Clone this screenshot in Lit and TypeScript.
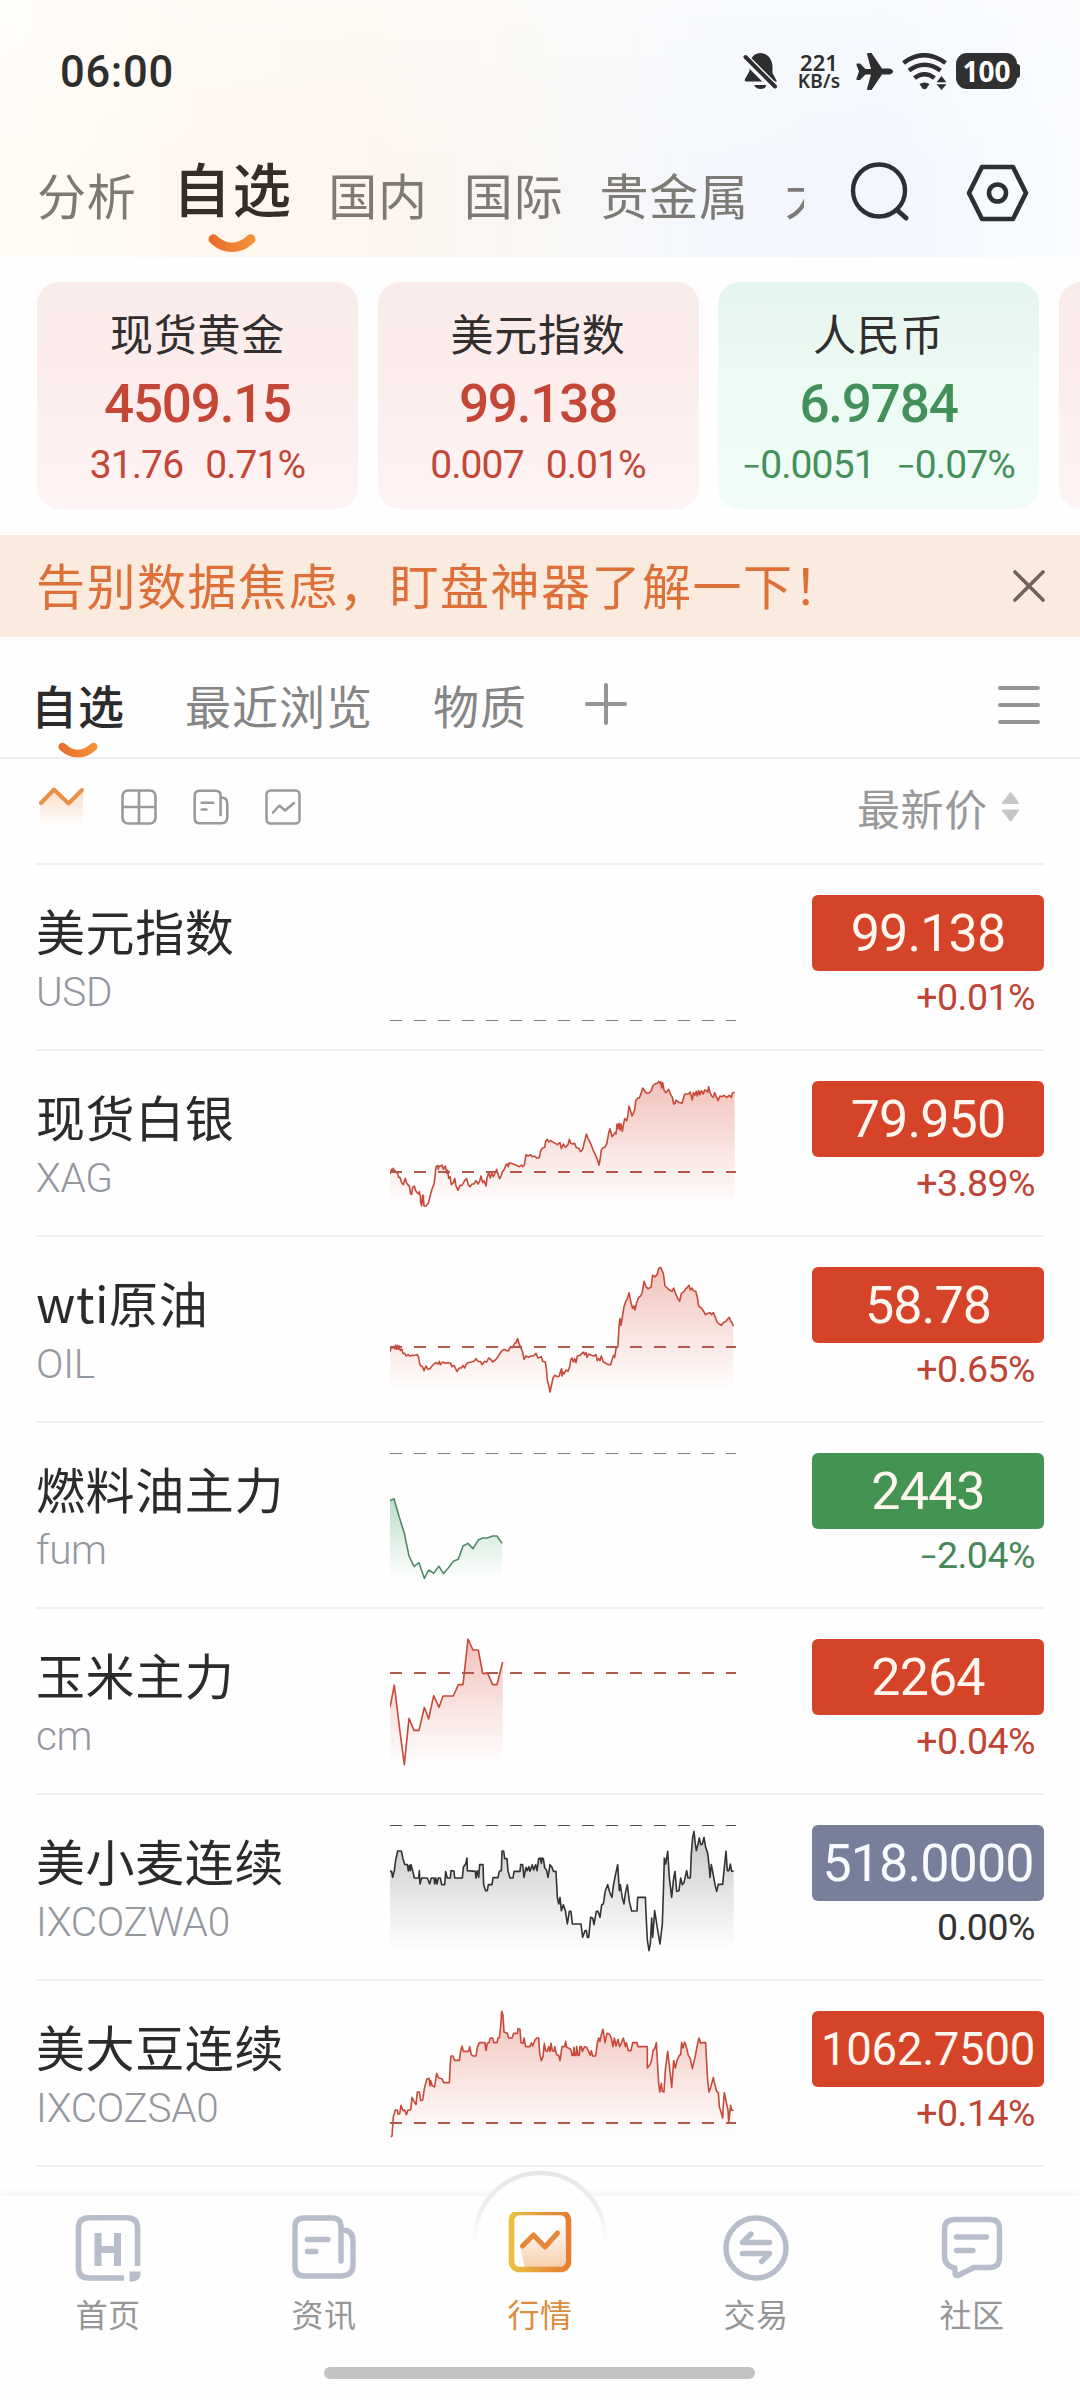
import { LitElement, html, svg, css } from "lit";
import { customElement, property } from "lit/decorators.js";

type Tone = "up" | "down" | "flat";

interface Quote {
  name: string;
  code: string;
  price: string;
  change: string;
  tone: Tone;
  top: number;
  base: number;
  thin?: boolean;
  points: string;
}

const SILVER =
  "60,343 62,335 65,328 67,333 70,325 72,335 75,332 78,338 82,336 86,352 90,352 95,368 100,374 106,355 110,370 114,375 118,378 122,402 125,403 128,382 133,378 136,390 141,398 146,402 148,395 151,410 152,428 155,437 158,405 160,408 162,438 168,438 175,430 180,410 186,388 192,372 195,350 198,320 203,317 205,328 207,318 213,318 216,315 220,328 226,318 230,340 233,330 236,355 240,350 244,374 250,368 254,355 258,378 264,391 270,376 276,376 284,362 290,356 295,374 300,380 306,372 312,372 318,362 324,372 329,364 333,348 338,368 342,362 348,378 352,350 356,338 361,354 365,338 370,350 375,340 380,328 384,343 389,356 394,346 397,335 403,328 408,315 412,312 415,320 418,308 428,311 436,314 443,318 448,320 454,315 458,320 463,315 468,284 474,288 482,284 486,290 494,288 500,294 508,293 512,272 518,264 524,262 527,244 532,238 536,246 542,242 552,248 562,254 570,248 574,266 580,252 586,262 594,254 598,238 602,250 608,252 614,250 619,263 626,265 632,275 638,268 642,250 646,236 649,222 654,235 662,250 670,272 676,284 682,298 687,315 690,300 694,270 698,264 704,262 710,252 716,220 720,206 726,230 731,224 735,218 738,222 741,192 744,206 747,190 750,210 753,192 757,214 760,196 764,176 770,182 774,164 777,138 781,150 786,168 790,160 794,150 797,122 803,114 808,114 812,104 818,84 824,92 830,100 838,98 844,92 848,78 854,72 862,70 866,64 870,70 872,65 875,84 878,68 882,90 888,98 896,88 902,104 907,112 911,132 915,130 918,120 926,127 936,130 940,116 944,102 950,102 956,102 960,96 964,108 967,120 970,98 974,106 979,94 982,108 986,92 990,104 994,92 1000,102 1004,90 1010,92 1013,96 1016,80 1020,98 1025,108 1030,112 1034,98 1038,108 1044,122 1050,108 1056,110 1062,106 1070,112 1078,106 1084,112 1088,98 1094,97";

const OIL =
  "60,876 63,862 66,864 70,860 73,866 77,855 79,868 83,856 85,868 88,858 91,872 96,868 99,880 104,880 109,888 114,884 120,888 128,886 136,885 142,884 146,892 149,912 153,918 158,920 162,932 168,918 174,928 180,926 186,918 192,912 198,908 204,912 208,904 211,914 218,906 226,910 234,908 242,910 246,920 252,916 256,924 261,934 268,924 274,924 279,916 284,924 288,914 294,908 304,906 312,904 318,896 324,904 332,905 336,914 344,904 350,906 356,894 362,898 368,906 376,900 384,890 390,880 396,872 402,868 410,872 416,872 420,862 428,862 434,850 438,848 443,836 448,854 452,862 458,876 462,898 468,888 476,892 482,888 490,888 498,880 504,894 514,890 518,904 526,906 529,925 532,960 536,975 540,996 544,978 549,954 554,946 562,950 568,948 571,936 575,926 576,948 579,936 582,942 588,930 594,934 599,920 602,900 606,894 610,906 614,896 618,908 622,888 630,886 636,880 641,876 644,884 648,878 651,892 656,882 664,886 672,888 678,884 682,902 686,896 690,902 694,888 700,906 708,910 714,914 722,914 726,900 731,886 734,892 738,866 744,858 747,800 750,776 753,796 757,772 762,740 766,728 772,716 777,698 783,728 788,745 792,738 795,750 800,728 806,712 812,708 817,696 822,664 828,680 834,686 843,682 848,646 856,650 862,642 866,626 872,622 876,632 880,640 885,678 892,684 898,690 906,694 911,684 918,704 924,716 929,724 934,700 942,694 948,686 952,682 957,676 961,690 966,684 970,692 977,694 982,712 986,738 994,744 1000,752 1006,764 1014,760 1020,758 1024,764 1030,758 1036,772 1041,786 1048,792 1054,796 1060,788 1068,784 1074,776 1078,772 1082,784 1086,788 1090,798";

const FUEL =
  "60,302 72,296 88,352 103,400 117,468 132,499 147,488 163,535 176,510 191,520 207,499 220,521 235,504 250,484 265,478 279,438 294,430 309,446 325,420 338,414 352,414 368,408 381,408 396,430";

const CORN =
  "60,922 73,855 88,980 103,1094 117,955 132,991 147,991 163,922 176,957 191,887 207,922 219,888 250,888 265,854 279,854 294,717 309,750 325,750 338,820 353,820 368,854 381,854 398,786";

const WHEAT =
  "60,274 65,274 68,292 73,272 77,240 83,213 94,213 99,236 104,253 112,254 115,273 118,256 121,272 123,254 128,272 133,294 146,294 148,272 150,312 155,294 172,294 179,312 184,294 192,294 194,312 197,294 201,312 205,294 211,294 215,314 224,314 227,275 232,294 241,294 243,272 252,273 254,294 277,294 280,262 287,252 291,234 292,272 316,274 318,294 322,272 326,292 329,254 339,254 341,314 347,332 352,332 355,314 366,314 369,293 384,293 388,274 394,272 396,213 401,213 404,236 411,236 414,272 420,294 429,294 432,274 450,274 452,254 458,254 462,292 468,262 472,272 477,260 480,274 487,254 491,270 497,254 501,272 506,236 511,234 514,250 516,234 520,236 524,262 530,272 534,292 540,254 546,262 550,274 558,274 562,352 566,372 570,352 574,392 580,374 586,392 592,432 598,394 603,394 607,432 633,432 638,472 645,452 649,452 652,472 656,472 662,412 668,414 672,434 679,394 684,394 690,412 695,374 700,372 706,332 713,314 719,336 726,352 730,318 736,286 743,254 748,332 751,314 757,354 762,372 766,340 772,314 778,364 785,393 801,393 803,352 826,352 829,420 832,480 837,512 841,492 845,414 848,472 854,392 862,444 870,492 877,432 880,340 883,234 887,252 893,214 898,292 905,352 911,294 915,274 920,334 927,332 932,294 937,314 942,308 950,272 954,294 961,294 964,220 968,172 972,154 976,192 979,212 984,192 988,174 992,194 997,192 1002,172 1007,202 1013,220 1017,254 1020,292 1024,254 1029,280 1035,314 1040,334 1045,313 1058,313 1063,262 1068,214 1072,272 1077,272 1081,252 1085,274 1091,273";

const SOY =
  "62,1070 66,1068 70,1010 76,990 82,990 84,1002 89,1002 93,976 99,992 104,990 109,1004 114,990 122,990 126,952 132,964 138,974 142,936 148,936 152,962 158,960 163,926 170,898 177,895 180,918 182,902 187,918 194,920 200,880 206,894 216,896 221,908 238,908 241,850 243,828 249,828 254,841 268,841 272,814 276,798 280,814 296,814 299,800 304,824 310,828 318,828 322,802 328,788 345,788 348,812 352,790 357,788 361,774 368,774 371,788 381,788 384,774 388,774 392,740 395,694 399,706 402,756 412,760 416,774 426,774 431,760 442,760 444,746 450,748 453,788 459,790 462,774 467,800 480,800 484,788 488,798 495,780 500,774 506,774 509,820 514,842 519,830 523,790 527,812 532,814 536,800 540,814 543,790 547,812 552,814 554,800 560,824 566,826 570,842 574,814 576,800 584,800 587,784 590,802 600,806 604,814 606,826 610,826 612,802 614,826 618,826 620,800 624,826 628,826 630,800 634,800 637,814 644,800 650,802 656,814 661,826 664,812 668,828 677,828 682,788 686,774 690,784 694,764 699,748 705,788 711,760 718,762 724,774 729,800 733,774 738,798 744,778 749,800 754,790 760,774 766,800 769,788 775,812 783,812 788,788 801,788 804,800 832,800 832,864 840,854 845,840 849,812 854,806 859,788 862,840 866,910 869,936 874,910 877,934 882,936 886,870 893,814 899,864 905,922 909,870 911,842 916,864 921,842 928,826 932,824 935,788 939,804 944,786 950,804 955,826 961,836 967,866 975,832 983,790 987,774 992,790 996,788 1007,788 1009,830 1013,900 1017,936 1023,920 1030,892 1034,912 1040,934 1045,938 1048,980 1053,996 1058,1014 1060,976 1063,938 1070,972 1074,990 1076,1028 1082,976 1085,990 1091,991";

const QUOTES: Quote[] = [
  { name: "美元指数", code: "USD", price: "99.138", change: "+0.01%", tone: "up", top: 0, base: 466.5, thin: true, points: "" },
  { name: "现货白银", code: "XAG", price: "79.950", change: "+3.89%", tone: "up", top: -27, base: 336, points: SILVER },
  { name: "wti原油", code: "OIL", price: "58.78", change: "+0.65%", tone: "up", top: 531, base: 861, points: OIL },
  { name: "燃料油主力", code: "fum", price: "2443", change: "-2.04%", tone: "down", top: 69, base: 160.5, thin: true, points: FUEL },
  { name: "玉米主力", code: "cm", price: "2264", change: "+0.04%", tone: "up", top: 627, base: 819, points: CORN },
  { name: "美小麦连续", code: "IXCOZWA0", price: "518.0000", change: "0.00%", tone: "flat", top: 45, base: 136.5, thin: true, points: WHEAT },
  { name: "美大豆连续", code: "IXCOZSA0", price: "1062.7500", change: "+0.14%", tone: "up", top: 603, base: 1029, points: SOY },
];

const CARDS = [
  { name: "现货黄金", value: "4509.15", diff: "31.76", pct: "0.71%", tone: "up" },
  { name: "美元指数", value: "99.138", diff: "0.007", pct: "0.01%", tone: "up" },
  { name: "人民币", value: "6.9784", diff: "-0.0051", pct: "-0.07%", tone: "down" },
  { name: "", value: "", diff: "", pct: "", tone: "up" },
];

// A leading minus is set a little smaller than the digits.
const signed = (text: string) =>
  text.startsWith("-") ? html`<span class="sign">−</span>${text.slice(1)}` : text;

const smile = (w: number, h: number) => html`
  <svg class="smile" width=${w} height=${h} viewBox="0 0 48 18">
    <defs>
      <linearGradient id="smile" x1="0" x2="1">
        <stop offset="0" stop-color="#e96a2b" />
        <stop offset="1" stop-color="#f3953a" />
      </linearGradient>
    </defs>
    <path d="M1 7.500C-1 3 4 -2 8.500 1.500C18 11 30 11 39.500 1.500C44 -2 49 3 47 7.500C34 21.500 14 21.500 1 7.500Z" fill="url(#smile)" />
  </svg>
`;

@customElement("spark-line")
export class SparkLine extends LitElement {
  @property({ attribute: false }) quote!: Quote;

  static styles = css`
    :host { display: block; width: 348px; height: 184px; }
    svg { display: block; }
    .up { color: #c74a39; }
    .down { color: #4f8a68; }
    .flat { color: #333; }
  `;

  render() {
    const q = this.quote;
    const line = q.points;
    const dashColor = q.tone === "up" ? (q.thin ? "#857b66" : "#b4574d") : q.tone === "down" ? "#74897a" : "#4a4a4a";
    let area = "";
    if (line) {
      const pairs = line.split(" ").map((p) => p.split(",").map(Number));
      const floor = Math.max(...pairs.map((p) => p[1]));
      area = `${pairs[0][0]},${floor} ${line} ${pairs[pairs.length - 1][0]},${floor}`;
    }
    const fill = q.tone === "up" ? "#dd5540" : q.tone === "down" ? "#3fa268" : "#666";
    return html`
      <svg class=${q.tone} width="348" height="184" viewBox="60 ${q.top} 1044 552">
        <defs>
          <linearGradient id="fade" x1="0" y1="0" x2="0" y2="1">
            <stop offset="0" stop-color=${fill} stop-opacity="0.36" />
            <stop offset="0.5" stop-color=${fill} stop-opacity="0.17" />
            <stop offset="1" stop-color=${fill} stop-opacity="0" />
          </linearGradient>
        </defs>
        ${line
          ? svg`<polygon points=${area} fill="url(#fade)" />
              <polyline points=${line} fill="none" stroke="currentColor" stroke-width="4.8" stroke-linejoin="round" />`
          : ""}
        <line x1="60" x2="1098" y1=${q.base} y2=${q.base} stroke=${dashColor}
          stroke-width=${q.thin ? 3 : 6} stroke-dasharray="36 36" />
      </svg>
    `;
  }
}

@customElement("quote-row")
export class QuoteRow extends LitElement {
  @property({ attribute: false }) quote!: Quote;

  static styles = css`
    :host {
      display: grid;
      grid-template-columns: 354px 348px 1fr;
      height: 184px;
      margin: 0 36px;
      border-bottom: 2px solid #efefef;
    }
    .label { display: flex; flex-direction: column; padding-top: 36px; }
    .name {
      font: 400 49px/58px "Noto Sans CJK SC", sans-serif;
      letter-spacing: 0.6px;
      color: #2b2b2b;
      white-space: nowrap;
    }
    .code {
      margin-top: 5px;
      font: 300 40.5px/56px Roboto, sans-serif;
      letter-spacing: -0.3px;
      color: #93979e;
    }
    .figures { display: flex; flex-direction: column; align-items: flex-end; padding-top: 30px; }
    .price {
      width: 232px;
      height: 76px;
      border-radius: 6px;
      text-align: center;
      font: 400 52px/78px Roboto, sans-serif;
      letter-spacing: -0.9px;
      color: #fff7ef;
      white-space: nowrap;
    }
    .price.long { font-size: 45.5px; letter-spacing: -0.3px; }
    .change {
      margin-right: 9px;
      margin-top: 4px;
      font: 400 37.5px/44px Roboto, sans-serif;
      letter-spacing: -0.5px;
    }
    .sign { font-size: 0.85em; }
    .price.up { background: #d54428; }
    .price.down { background: #439352; }
    .price.flat { background: #777f9b; color: #f7faff; }
    .change.up { color: #bf4434; }
    .change.down { color: #47875a; }
    .change.flat { color: #333; }
  `;

  render() {
    const q = this.quote;
    return html`
      <div class="label">
        <span class="name">${q.name}</span>
        <span class="code">${q.code}</span>
      </div>
      <spark-line .quote=${q}></spark-line>
      <div class="figures">
        <span class="price ${q.tone} ${q.price.length > 8 ? "long" : ""}">${q.price}</span>
        <span class="change ${q.tone}">${signed(q.change)}</span>
      </div>
    `;
  }
}

@customElement("app-root")
export class AppRoot extends LitElement {
  static styles = css`
    :host {
      display: flex;
      flex-direction: column;
      width: 1080px;
      height: 2400px;
      overflow: hidden;
      background: #fefefe;
      font-family: "Noto Sans CJK SC", sans-serif;
      color: #2b2b2b;
    }
    svg { display: block; flex: none; }
    .header {
      flex: none;
      height: 257px;
      background:
        linear-gradient(180deg, rgba(255, 255, 255, 0.35), rgba(255, 255, 255, 0) 70%),
        linear-gradient(90deg, #fffdf7 0, #fef7ef 18%, #fdf5ee 34%, #f9f7f4 50%, #f4f7fc 64%, #f2f6fd 82%, #fafcff 100%);
    }
    .status {
      display: flex;
      align-items: center;
      height: 142px;
      padding: 0 60px 0 60px;
      color: #2e2e2c;
    }
    .clock { padding-top: 3px; font: 500 43.5px/50px Roboto, sans-serif; letter-spacing: 0.7px; }
    .indicators { display: flex; align-items: center; margin-left: auto; }
    .speed {
      display: flex;
      flex-direction: column;
      width: 46px;
      margin: 0 14px 0 17px;
      text-align: center;
      font: 600 22px/20px "Noto Sans", sans-serif;
    }
    .unit { font-size: 19px; line-height: 19px; letter-spacing: 0.2px; }
    .battery {
      display: flex;
      align-items: center;
    }
    .cell {
      width: 61px;
      height: 36px;
      border-radius: 11px;
      background: #2f3131;
      color: #fff;
      text-align: center;
      font: 700 28px/37px "Noto Sans", sans-serif;
    }
    .nub { width: 3px; height: 14px; border-radius: 0 3px 3px 0; background: #2f3131; }
    .tabs { display: flex; height: 115px; }
    .scroller {
      display: flex;
      gap: 36px;
      width: 767px;
      padding-left: 37px;
      overflow: hidden;
      white-space: nowrap;
    }
    .tab {
      flex: none;
      padding-top: 17px;
      font-size: 49px;
      line-height: 70px;
      letter-spacing: 0.8px;
      color: #7d7a75;
      height: 98px;
    }
    .tab.on {
      display: flex;
      flex-direction: column;
      align-items: center;
      padding-top: 5px;
      font-size: 58.5px;
      line-height: 80px;
      letter-spacing: 1.3px;
      font-weight: 500;
      color: #332e29;
      height: 110px;
    }
    .tab.on .smile { margin-top: 7px; }
    .tools { display: flex; gap: 53px; margin: 20px 0 0 46px; }

    .cards {
      flex: none;
      display: flex;
      gap: 19.5px;
      padding: 25px 0 26px 37px;
      overflow: hidden;
    }
    .card {
      flex: none;
      display: flex;
      flex-direction: column;
      align-items: center;
      width: 321px;
      height: 227px;
      border-radius: 22px;
    }
    .card.up { background: linear-gradient(#faeceb, #fcedec 40%, #fef3f4); color: #c44636; }
    .card.down { background: linear-gradient(#e5f5ef, #ecfbf4 45%, #f1fcf8); color: #43905a; }
    .title { margin-top: 22px; font-size: 43px; line-height: 56px; letter-spacing: 0.7px; color: #332e2e; font-weight: 400; }
    .value { margin-top: 14px; font: 500 53px/60px Roboto, sans-serif; letter-spacing: -1.2px; }
    .diff { display: flex; gap: 22px; margin-top: 8px; font: 400 39px/46px Roboto, sans-serif; letter-spacing: -0.9px; }
    .sign { font-size: 0.85em; }

    .banner {
      flex: none;
      display: flex;
      align-items: center;
      justify-content: space-between;
      height: 101.5px;
      padding: 0 34px 0 36px;
      background: #fbeade;
      color: #dd7038;
      font-size: 49px;
      letter-spacing: 1.5px;
      line-height: 96px;
    }
    .banner span { padding-bottom: 3px; }
    .groups {
      flex: none;
      display: flex;
      height: 120.5px;
      padding: 0 39px 0 31px;
      border-bottom: 2px solid #eee;
    }
    .group {
      padding-top: 35px;
      margin-right: 60px;
      font-size: 46px;
      line-height: 64px;
      letter-spacing: 1px;
      color: #858585;
    }
    .group.on {
      display: flex;
      flex-direction: column;
      align-items: center;
      font-weight: 500;
      color: #2b2b2b;
    }
    .group.on .smile { margin-top: 6px; }
    .plus { margin: 46px 0 0 -2px; }
    .menu { margin: 48px 0 0 auto; }
    .modes {
      flex: none;
      display: flex;
      align-items: center;
      box-sizing: border-box;
      height: 106px;
      padding-bottom: 9px;
      margin: 0 36px;
      border-bottom: 2px solid #efefef;
      color: #9a9a9a;
    }
    .trend { margin: 0 35px 0 1px; }
    .modes .sort {
      display: flex;
      align-items: center;
      margin: 0 24px 0 auto;
      font-size: 43px;
      letter-spacing: 0.7px;
      line-height: 60px;
      color: #999;
    }
    .sort svg { margin-left: 13px; }
    .mode { margin-right: 36px; }

    .list { flex: 1; min-height: 0; }

    .dock {
      position: relative;
      flex: none;
      display: grid;
      grid-template-columns: repeat(5, 1fr);
      height: 204px;
      background: #fefefe;
      box-shadow: 0 -4px 6px rgba(0, 0, 0, 0.035);
    }
    .bump {
      position: absolute;
      left: 465px;
      top: -33px;
    }
    .item {
      position: relative;
      display: flex;
      flex-direction: column;
      align-items: center;
      padding-top: 16px;
      font-size: 32px;
      line-height: 46px;
      letter-spacing: 0.6px;
      color: #969696;
      height: 130px;
    }
    .item svg { margin: 0 0 8px; }
    .paper { padding: 3px 0; color: #b7bdcb; }
    .item.on { color: #dd8c3c; }
    .pill {
      position: absolute;
      left: 324px;
      bottom: 21px;
      width: 431px;
      height: 12px;
      border-radius: 6px;
      background: #c2c2c2;
    }
  `;

  private statusIcons() {
    return html`
      <svg width="36" height="36" viewBox="0 0 36 36" fill="#2e2e2e">
        <path d="M8 6Q11 0 17.500 0C25 .5 29 6 29.500 13V20L34 28.500H3.500Q1 28.500 2 26L6.500 18V11Z" />
        <path d="M11 32H24Q22 36 17.500 36T11 32Z" />
        <path d="M-1 2L34 37" stroke="#f6f8fd" stroke-width="9" />
        <path d="M2.500 4L32 33.500" stroke="#2e2e2e" stroke-width="4" stroke-linecap="round" />
      </svg>
      <div class="speed"><span>221</span><span class="unit">KB/s</span></div>
      <svg width="37" height="37" viewBox="0 0 37 37" fill="#2e2e2e">
        <path d="M1 10.500H4L9.500 16H15L11 1Q11 0 12 0H15.500L26 15.500H33.500Q37 16.500 37 18.500T33.500 21.500H26L15.500 37H12Q11 37 11 36L15 21.500H9.500L4 27H1Q0 27 .5 25.500L3 18.500L.5 12Q0 10.500 1 10.500Z" />
      </svg>
      <svg style="margin:0 8px 0 9px" width="46" height="37" viewBox="0 0 46 37" fill="none" stroke="#2e2e2e" stroke-width="4.600">
        <path d="M1.500 10Q22 -5.500 43.500 10" />
        <path d="M7 17.500Q22.500 6 38.500 17.500" />
        <path d="M12.500 25Q22.500 17.500 32.500 25" />
        <path d="M17.500 31Q22.500 28 27.500 31L24.500 35.500Q22.500 37 20.500 35.500Z" fill="#2e2e2e" stroke="none" />
        <path d="M39.500 23L44.500 29.300H34.500ZM34.500 31.300H44.500L39.500 37Z" fill="#2e2e2e" stroke="none" />
      </svg>
      <div class="battery"><div class="cell">100</div><div class="nub"></div></div>
    `;
  }

  private newsIcon(w: number, h: number, sw: number) {
    return html`
      <svg class="mode" width=${w} height=${h} viewBox="0 0 64 64" fill="none" stroke="currentColor"
        stroke-width=${sw} stroke-linecap="round" stroke-linejoin="round">
        <path d="M49 46V12Q49 3 40 3H12Q3 3 3 12V51Q3 61 12 61H50Q61 60 61 50V26Q61 15 50 15" />
        <path d="M15.500 24.500H36M15.500 36.500H24" />
      </svg>
    `;
  }

  render() {
    return html`
      <div class="header">
        <div class="status">
          <span class="clock">06:00</span>
          <div class="indicators">${this.statusIcons()}</div>
        </div>
        <div class="tabs">
          <div class="scroller">
            <span class="tab">分析</span>
            <span class="tab on">自选${smile(48, 18)}</span>
            <span class="tab">国内</span>
            <span class="tab">国际</span>
            <span class="tab">贵金属</span>
            <span class="tab">大</span>
          </div>
          <div class="tools">
            <svg width="62" height="62" viewBox="0 0 62 62" fill="none" stroke="#2c2f33" stroke-width="4.400" stroke-linecap="round">
              <circle cx="29" cy="28.500" r="26" />
              <path d="M47 48L56 56" stroke-width="5" />
            </svg>
            <svg width="64" height="62" viewBox="0 0 64 62" fill="none" stroke="#2c2f33" stroke-width="4.600" stroke-linejoin="round">
              <path d="M17 5H48L61 31L48 57H17L4 31Z" />
              <circle cx="32.500" cy="31" r="8.500" />
            </svg>
          </div>
        </div>
      </div>

      <div class="cards">
        ${CARDS.map(
          (c) => html`
            <div class="card ${c.tone}">
              <span class="title">${c.name}</span>
              <span class="value">${c.value}</span>
              <span class="diff"><span>${signed(c.diff)}</span><span>${signed(c.pct)}</span></span>
            </div>
          `
        )}
      </div>

      <div class="banner">
        <span>告别数据焦虑，盯盘神器了解一下！</span>
        <svg width="34" height="34" viewBox="0 0 34 34" stroke="#6d625c" stroke-width="3.600" stroke-linecap="round">
          <path d="M3 3L31 31M31 3L3 31" />
        </svg>
      </div>

      <div class="groups">
        <span class="group on">自选${smile(40, 16)}</span>
        <span class="group">最近浏览</span>
        <span class="group">物质</span>
        <svg class="plus" width="42" height="42" viewBox="0 0 42 42" stroke="#949494" stroke-width="4" stroke-linecap="round">
          <path d="M2 21H40M21 2V40" />
        </svg>
        <svg class="menu" width="43" height="40" viewBox="0 0 43 40" stroke="#949494" stroke-width="4" stroke-linecap="round">
          <path d="M2 3H40M2 20H40M2 37H40" />
        </svg>
      </div>

      <div class="modes">
        <svg class="trend" width="49" height="42" viewBox="0 0 49 42">
          <defs>
            <linearGradient id="glow" x1="0" y1="0" x2="0" y2="1">
              <stop offset="0" stop-color="#f6b584" stop-opacity=".45" />
              <stop offset="1" stop-color="#f6b584" stop-opacity="0" />
            </linearGradient>
          </defs>
          <path d="M3 17L17 4L31 18L46 4V40H3Z" fill="url(#glow)" />
          <path d="M4 17L17 3.500L31.500 17.500L45 4" fill="none" stroke="#e5914a" stroke-width="4" stroke-linecap="round" stroke-linejoin="round" />
        </svg>
        <svg class="mode" width="36" height="36" viewBox="0 0 36 36" fill="none" stroke="currentColor" stroke-width="2.600">
          <rect x="1.500" y="1.500" width="33" height="33" rx="5.500" />
          <path d="M18 1.500V34.500M1.500 18H34.500" />
        </svg>
        ${this.newsIcon(36, 36, 4.6)}
        <svg class="mode" width="36" height="36" viewBox="0 0 36 36" fill="none" stroke="currentColor" stroke-width="2.500" stroke-linecap="round" stroke-linejoin="round">
          <rect x="1.500" y="1.500" width="33" height="33" rx="4" />
          <path d="M8 23.500L14.500 16.500L20 21.500L29 14" />
        </svg>
        <div class="sort">
          最新价
          <svg width="19" height="32" viewBox="0 0 19 32" fill="#c6c6c6" stroke="#c6c6c6" stroke-width="2" stroke-linejoin="round">
            <path d="M9.500 2L17 12H2ZM2 19.500H17L9.500 29.500Z" />
          </svg>
        </div>
      </div>

      <div class="list">${QUOTES.map((q) => html`<quote-row .quote=${q}></quote-row>`)}</div>

      <div class="dock">
        <svg class="bump" width="150" height="110" viewBox="0 0 150 110">
          <defs>
            <linearGradient id="rim" x1="0" y1="0" x2="0" y2="1">
              <stop offset="0" stop-color="#e6e6e6" />
              <stop offset=".5" stop-color="#efefef" />
              <stop offset=".9" stop-color="#fefefe" />
            </linearGradient>
          </defs>
          <path d="M9 76A66 66 0 0 1 141 76V110H9Z" fill="#fefefe" />
          <path d="M10 88V76A65 66 0 0 1 140 76V88" fill="none" stroke="url(#rim)" stroke-width="4.500" />
        </svg>
        <div class="item">
          <svg width="70" height="70" viewBox="0 0 70 70" fill="none" stroke="#b7bdcb" stroke-width="5.600">
            <path d="M64.500 54V16Q64.500 5.800 54 5.800H16Q5.500 5.800 5.500 16V56Q5.500 66 16 66H51" />
            <path d="M25 21V54M44.500 21V54M25 37.500H44.500" stroke-width="7" />
            <path d="M56.500 59.500H67.500V62Q67 69 60 69.500H56.500Z" fill="#b7bdcb" stroke="none" />
          </svg>
          首页
        </div>
        <div class="item">
          <span class="paper">${this.newsIcon(64, 64, 5.4)}</span>
          资讯
        </div>
        <div class="item on">
          <svg width="70" height="70" viewBox="0 0 70 70" fill="none" stroke-linecap="round" stroke-linejoin="round">
            <defs>
              <linearGradient id="gold" x1="0" x2="1">
                <stop offset="0" stop-color="#e8c040" />
                <stop offset=".6" stop-color="#e8923a" />
                <stop offset="1" stop-color="#e57f33" />
              </linearGradient>
              <linearGradient id="peach" x1="0" y1="0" x2="0" y2="1">
                <stop offset="0" stop-color="#fce4cc" stop-opacity=".3" />
                <stop offset="1" stop-color="#f8cda8" />
              </linearGradient>
            </defs>
            <path d="M15 35L26.500 24L38 35L55 15L60 12V56H20Z" fill="url(#peach)" />
            <rect x="6.500" y="0.500" width="57" height="57" rx="8" stroke="url(#gold)" stroke-width="5.600" />
            <path d="M17.500 34L28.500 23L40 35L52.500 21" stroke="#e5883a" stroke-width="5" />
          </svg>
          行情
        </div>
        <div class="item">
          <svg width="70" height="70" viewBox="0 0 70 70" fill="none" stroke="#b7bdcb" stroke-width="5.400" stroke-linecap="round" stroke-linejoin="round">
            <circle cx="35" cy="36" r="30" />
            <path d="M48.500 30.500H21.500L30 22" />
            <path d="M21.500 41.500H48.500L40.500 49.500" />
          </svg>
          交易
        </div>
        <div class="item">
          <svg width="70" height="70" viewBox="0 0 70 70" fill="none" stroke="#b7bdcb" stroke-width="5.400" stroke-linecap="round" stroke-linejoin="round">
            <path d="M18 7.500H53Q62.500 7.500 62.500 17V45Q62.500 55.500 53 55.500H37L21 63.500Q18 64 18 60.500V56Q7.500 54 7.500 44V17Q7.500 7.500 18 7.500Z" />
            <path d="M19.500 25H49.500M19.500 38.500H36" />
          </svg>
          社区
        </div>
        <div class="pill"></div>
      </div>
    `;
  }
}
